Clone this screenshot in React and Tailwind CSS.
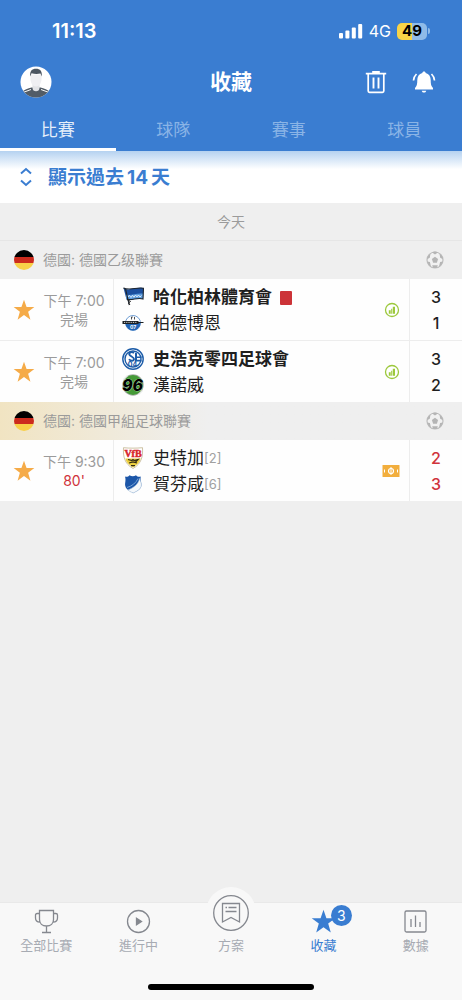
import { useState } from "react";

const tabs = ["比賽", "球隊", "賽事", "球員"];

const leagues = [
  {
    name: "德國: 德國乙级聯賽",
    highlight: false,
    matches: [
      {
        time: "7:00",
        status: "完場",
        live: false,
        badge: "stats",
        home: { name: "哈化柏林體育會", crest: "hertha", score: 3, bold: true, redCard: true },
        away: { name: "柏德博恩", crest: "paderborn", score: 1 },
      },
      {
        time: "7:00",
        status: "完場",
        live: false,
        badge: "stats",
        home: { name: "史浩克零四足球會", crest: "schalke", score: 3, bold: true },
        away: { name: "漢諾威", crest: "hannover", score: 2 },
      },
    ],
  },
  {
    name: "德國: 德國甲組足球聯賽",
    highlight: true,
    matches: [
      {
        time: "9:30",
        status: "80'",
        live: true,
        badge: "pitch",
        home: { name: "史特加", crest: "stuttgart", score: 2, rank: 2 },
        away: { name: "賀芬咸", crest: "hoffenheim", score: 3, rank: 6 },
      },
    ],
  },
];

const StarIcon = ({ className }) => (
  <svg viewBox="0 0 24 24" className={className} fill="currentColor" aria-hidden="true">
    <path d="M12 .8l2.8 8h8.5l-6.800 5.100 2.500 8.600L12 17.400l-7 5.100 2.500-8.600L.7 8.800h8.500z" />
  </svg>
);

const Avatar = () => (
  <svg viewBox="0 0 32 32" className="size-8" aria-hidden="true">
    <defs>
      <clipPath id="avatar">
        <circle cx="16" cy="16" r="15.5" />
      </clipPath>
    </defs>
    <circle cx="16" cy="16" r="15.5" fill="#fff" />
    <g clipPath="url(#avatar)">
      <path d="M2 32v-6c2-2.500 6-3.500 9.500-4.500h9c3.500 1 7.500 2 9.500 4.500v6z" fill="#525c66" />
      <path d="M3 26.500l8-3M29 26.500l-8-3" stroke="#fff" strokeWidth="1" />
      <path d="M12.500 17h7v5c0 2-1.500 3.300-3.500 3.300S12.500 24 12.500 22z" fill="#e2e3e6" />
      <path d="M10.500 8.500h11V13c0 4-2.500 7.500-5.500 7.500S10.500 17 10.500 13z" fill="#efeff2" />
      <path d="M10.300 10.500C9.500 5 12 2.700 16 2.700s6.500 2.300 5.700 7.800l-1.200-3c-3 .6-6 .5-9-.2z" fill="#4c5661" />
    </g>
  </svg>
);

const TrashIcon = () => (
  <svg viewBox="0 0 24 24" className="size-6" fill="none" stroke="currentColor" strokeWidth="1.700" aria-hidden="true">
    <path d="M1.800 3.600h20.400M8.200 2h7.600" strokeWidth="1.900" />
    <path d="M4.200 4v17a1.300 1.300 0 0 0 1.300 1.300h13a1.300 1.300 0 0 0 1.300-1.300V4" />
    <path d="M9.500 7.500v11M14.500 7.500v11" strokeWidth="1.900" />
  </svg>
);

const BellIcon = () => (
  <svg viewBox="0 0 24 24" className="size-6" fill="currentColor" aria-hidden="true">
    <path d="M12 1.600c1 0 1.600.7 1.700 1.500 3.300.9 5 3.700 5 7 0 4.300.5 6.200 2.300 8v1.500H3v-1.500c1.800-1.800 2.300-3.700 2.300-8 0-3.300 1.700-6.100 5-7 .1-.8.7-1.500 1.700-1.500zM9.700 20.700h4.600c-.3 1.200-1.200 1.900-2.300 1.900s-2-.7-2.300-1.900z" />
    <path d="M4.500 4C2.800 5.600 1.700 7.800 1.500 10.500M19.500 4c1.700 1.600 2.800 3.800 3 6.500" fill="none" stroke="currentColor" strokeWidth="1.700" />
  </svg>
);

const SignalIcon = () => (
  <svg viewBox="0 0 24 16" className="h-4 w-6" fill="#fff" aria-hidden="true">
    <rect x="0" y="10" width="4" height="5.500" rx="1" />
    <rect x="6.400" y="7.500" width="4" height="8" rx="1" />
    <rect x="12.800" y="4.500" width="4" height="11" rx="1" />
    <rect x="19.200" y="1" width="4" height="14.500" rx="1" />
  </svg>
);

const GermanFlag = () => (
  <span className="flex size-5 shrink-0 flex-col overflow-hidden rounded-full">
    <span className="flex-1 bg-black" />
    <span className="flex-1 bg-[#cc2b1d]" />
    <span className="flex-1 bg-[#f8d048]" />
  </span>
);

const BallIcon = () => (
  <svg viewBox="0 0 18 18" className="size-[18px]" aria-hidden="true">
    <circle cx="9" cy="9" r="8" fill="#f1f1f1" stroke="#bdbdbd" strokeWidth="1.200" />
    <g fill="#b5b5b5">
      <path d="M9 5.800l3.100 2.200-1.200 3.700H7.100L5.900 8z" />
      <path d="M5.800 1.300L9 3.500l3.200-2.200a8 8 0 0 0-6.400 0zM1 8.200l2.800-1.500.7-4.200A8 8 0 0 0 1 8.200zM17 8.200l-2.800-1.500-.7-4.200A8 8 0 0 1 17 8.200zM1.200 10.500l2.700.6 1.200 4.800a8 8 0 0 1-3.900-5.400zM16.800 10.500l-2.700.6-1.200 4.800a8 8 0 0 0 3.900-5.400zM6.200 14.300h5.600l-.7 2.500a8 8 0 0 1-4.200 0z" />
    </g>
  </svg>
);

const StatsBadge = () => (
  <svg viewBox="0 0 16 16" className="size-4" aria-label="統計">
    <circle cx="8" cy="8" r="6.500" fill="#fff" stroke="#9cc83c" strokeWidth="1.300" />
    <path d="M4.800 8.200h1.900v3.500H4.800zM7.200 6.800h1v4.900h-1zM8.800 4.800h2.200v6.900H8.800z" fill="#9cc83c" />
  </svg>
);

const PitchBadge = () => (
  <svg viewBox="0 0 18 12" className="h-3 w-[18px]" aria-label="現場">
    <rect x=".5" width="17" height="12" rx=".6" fill="#f2ae3d" />
    <circle cx="9" cy="6" r="2.500" fill="none" stroke="#fff" strokeWidth="1.200" />
    <path d="M9 2v8M2.500 4.500v3M15.500 4.500v3" stroke="#fff" />
  </svg>
);

const crests = {
  hertha: (
    <>
      <path d="M1.500 2l2 1C8 4.600 15 .6 21.500 2.300L21 13c-6-1.700-10 1.600-16.500.4z" fill="#1c4f9e" />
      <path d="M4 8.500c5 1.500 11-2 17.300-.8L21 13c-6-1.700-10 1.600-16.500.4z" fill="#5b9bdd" />
      <path d="M5.500 11.200l2-1.700 1.500 2 1.500-2.200 1.500 2L13.500 9l1.500 2 1.500-2 1.500 2 1.500-1.500" fill="none" stroke="#e8f1fb" strokeWidth=".9" />
      <path d="M1.500 2l2 1 3.800 16M1.500 2C8 5 15 .8 21.500 2.300L21 13c-6-1.700-10 1.600-16 .4" fill="none" stroke="#1d2630" strokeWidth="1.100" />
      <path d="M5 13.500l3.500 2-2 1.500 1.500 2" fill="none" stroke="#222" />
    </>
  ),
  paderborn: (
    <>
      <circle cx="11" cy="11" r="7.500" fill="#fff" stroke="#4d86c9" strokeWidth=".8" />
      <path d="M3.500 11h15a7.500 7.500 0 0 1-15 0z" fill="#2265b5" />
      <path d="M.5 9h16v1h5v1h-5v1H.5z" fill="#1b2024" />
      <path d="M2 10.400h13" stroke="#fff" strokeWidth=".8" strokeDasharray="1 .8" />
      <path d="M9.500 5h1.300M9.500 5v2.500M12.500 5v2.500" stroke="#222" strokeWidth=".8" fill="none" />
      <text x="11" y="17" fontSize="5" fontWeight="700" textAnchor="middle" fill="#fff">07</text>
    </>
  ),
  schalke: (
    <>
      <circle cx="11" cy="11" r="10.200" fill="#fff" stroke="#1c5ca8" strokeWidth="1.400" />
      <circle cx="11" cy="11" r="8" fill="#fff" stroke="#1c5ca8" strokeWidth="1.400" />
      <path d="M13 4.500v9h6.500v-1.800H15V5.200zM15 8.500h4.500v1.400H15z" fill="#1c5ca8" />
      <path d="M12 5.200c-2-2-5.200-.9-4.700 1.300.5 2 4.700 2.200 4.700 4.600 0 2.300-3.700 2-5 .2" fill="none" stroke="#1c5ca8" strokeWidth="1.900" />
      <text x="10.500" y="19" fontSize="7" fontWeight="700" textAnchor="middle" fill="#1c5ca8">04</text>
    </>
  ),
  hannover: (
    <>
      <circle cx="11" cy="11" r="10.700" fill="#a7aba8" />
      <circle cx="11" cy="11" r="9.900" fill="#459b37" />
      <path d="M1.500 5.500l4-4M16.500 20.500l4-4" stroke="#e7ece6" strokeWidth="1.200" />
      <text x="10.600" y="16.600" fontSize="16" fontWeight="800" fontStyle="italic" textAnchor="middle" fill="#000" stroke="#dfe8dd" strokeWidth=".6" paintOrder="stroke">96</text>
    </>
  ),
  stuttgart: (
    <>
      <path d="M1.500.7C7 1.300 15 1.300 20.500.7c.5 9-1 16-9.500 20.800C2.500 16.700 1 9.700 1.500.7z" fill="#fff" stroke="#b9a97e" strokeWidth=".7" />
      <path d="M3.300 11.500h15.400c-1 3.800-3.500 6.600-7.700 9-4.200-2.400-6.700-5.200-7.700-9z" fill="#eccf3f" />
      <path d="M6 12.500l4 1 1-1 1 1 4-1-2.500 2.600M7 16l3-.8h2l3 .8M9 18.600l4 .1" fill="none" stroke="#332c14" strokeWidth="1.200" />
      <text x="11" y="10" fontSize="10" fontWeight="700" textAnchor="middle" fill="#d8262c" fontFamily="Liberation Serif, serif" stroke="#d8262c" strokeWidth=".5">VfB</text>
    </>
  ),
  hoffenheim: (
    <>
      <path d="M3 3.500c1.800.6 3.200.2 4.500-1.300 2 1.400 4.500 1.400 6.500 0 1.300 1.500 3 1.900 4.800 1.300-1 4 1.200 6.500.5 9.500-.9 4-5 5.300-8 7-3-1.700-7.100-3-8-7-.7-3 1-5.500-.3-9.500z" fill="#1c56a8" />
      <path d="M17.500 5.500c-1 6-6.300 9.500-11.700 11.500 1.500 1.500 3.500 2 5.500 3 3-1.700 7.100-3 8-7 .5-2.200-.9-5-1.800-7.500z" fill="#f5f8fb" stroke="#adc4dc" strokeWidth=".6" />
      <path d="M16 5.500c-2 4.500-6 7.500-11 9" fill="none" stroke="#8ab4e0" strokeWidth=".8" />
    </>
  ),
};

const Team = ({ team, live }) => (
  <div className="flex h-[26px] items-center gap-[9px]">
    <svg viewBox="0 0 22 22" className="size-[22px] shrink-0 font-['Inter']" aria-hidden="true">
      {crests[team.crest]}
    </svg>
    <span className="flex items-center pt-0.5 text-[17px] text-[#1f1f1f]">
      <span className={team.bold ? "font-bold" : ""}>{team.name}</span>
      {live && <span className="text-[13px] text-[#a0a0a0]">[{team.rank}]</span>}
      {team.redCard && <span className="ml-2 h-3.5 w-3 rounded-[1px] bg-[#cc3338]" />}
    </span>
  </div>
);

const Match = ({ match }) => {
  const [starred, setStarred] = useState(true);

  return (
    <li className="box-content flex h-[61px] border-b border-[#ededed] bg-[#fefefe] last:border-b-0">
      <div className="flex w-[114px] items-center border-r border-[#ededed] pl-[13px]">
        <button
          type="button"
          aria-label="收藏比賽"
          aria-pressed={starred}
          onClick={() => setStarred(!starred)}
          className={starred ? "text-[#f5ab48]" : "text-[#cccccc]"}
        >
          <StarIcon className="size-[22px]" />
        </button>
        <div className="flex flex-1 flex-col items-center text-sm leading-[19px] text-[#9b9b9b]">
          <span className="flex gap-1">
            下午<span>{match.time}</span>
          </span>
          <span className={match.live ? "text-[#d0333b]" : ""}>{match.status}</span>
        </div>
      </div>
      <div className="flex flex-1 flex-col justify-center pl-2">
        <Team team={match.home} live={match.live} />
        <Team team={match.away} live={match.live} />
      </div>
      <div className="flex items-center pr-[9px]">
        {match.badge === "stats" ? <StatsBadge /> : <PitchBadge />}
      </div>
      <div
        className={
          "flex w-[53px] flex-col items-center justify-center border-l border-[#ededed] text-base leading-[26px] font-medium " +
          (match.live ? "text-[#d0333b]" : "text-[#1f1f1f]")
        }
      >
        <span>{match.home.score}</span>
        <span>{match.away.score}</span>
      </div>
    </li>
  );
};

const navItems = [
  {
    label: "全部比賽",
    icon: (
      <path d="M5.500 1.500h14v9c0 4-2.800 6.500-7 6.500s-7-2.500-7-6.500zM5.500 4.500H3.200C2 4.500 1.500 5 1.500 6v3c0 2.600 1.200 4 4.500 4.200M19.500 4.500h2.300c1.200 0 1.700.5 1.700 1.500v3c0 2.600-1.200 4-4.500 4.200M12.500 17v6.500M8 23.500h9" />
    ),
  },
  {
    label: "進行中",
    icon: (
      <>
        <circle cx="12.500" cy="12.500" r="11" />
        <path d="M10.500 9.300l5 3.200-5 3.200z" fill="currentColor" />
      </>
    ),
  },
  { label: "方案", raised: true },
  { label: "收藏", active: true, count: 3 },
  {
    label: "數據",
    icon: (
      <>
        <rect x="2" y="2" width="21" height="21" rx="1.500" />
        <path d="M8 10v8M12.500 6.500V18M17 13v5" />
      </>
    ),
  },
];

const NavIcon = ({ item }) => {
  if (item.raised) {
    return (
      <span className="relative flex h-[25px] items-center justify-center">
        <svg viewBox="0 0 50 50" className="absolute -top-[22px] size-[50px] max-w-none" fill="none" stroke="#85888f" strokeWidth="1.300" aria-hidden="true">
          <circle cx="25" cy="25" r="25" fill="#f8f8f8" stroke="none" />
          <circle cx="25" cy="26" r="17.300" />
          <path d="M16.500 16.500h17V35L25 30.500 16.500 35zM19.500 20.500h1.500M22.500 20.500h8M19.500 24.500h11" />
        </svg>
      </span>
    );
  }
  if (item.active) {
    return (
      <span className="relative">
        <StarIcon className="size-[25px]" />
        <span className="absolute -top-1 left-5 flex size-[21px] items-center justify-center rounded-full bg-[#3a7dd1] text-sm text-white">
          {item.count}
        </span>
      </span>
    );
  }
  return (
    <svg viewBox="0 0 25 25" className="size-[25px] text-[#85888f]" fill="none" stroke="currentColor" strokeWidth="1.300" aria-hidden="true">
      {item.icon}
    </svg>
  );
};

const App = () => {
  const [tab, setTab] = useState("比賽");

  return (
    <div
      lang="zh-Hant"
      className="flex min-h-screen flex-col bg-[#efefef] font-['Inter','Noto_Sans_CJK_TC',sans-serif]"
    >
      <header className="bg-[#3a7dd1] text-white">
        <div className="flex items-center justify-between pt-4 pr-8 pl-[52px]">
          <span className="text-xl leading-[30px] font-semibold">11:13</span>
          <div className="flex items-center gap-1.5">
            <SignalIcon />
            <span className="text-base">4G</span>
            <span className="flex items-center gap-px">
              <span className="flex h-[17px] w-[30px] items-center justify-center rounded-[5px] bg-linear-to-r from-[#f8d347] from-50% to-[#8fbbe8] to-50% text-[15px] font-bold text-black">
                49
              </span>
              <span className="h-1.5 w-0.5 rounded-r-full bg-[#8fbbe8]" />
            </span>
          </div>
        </div>

        <div className="grid grid-cols-3 items-center px-5 pt-5 pb-2">
          <button type="button" aria-label="帳戶" className="justify-self-start rounded-full">
            <Avatar />
          </button>
          <h1 className="text-center text-[21px] leading-8 font-bold">收藏</h1>
          <div className="flex justify-end gap-6 pr-1.5">
            <button type="button" aria-label="刪除">
              <TrashIcon />
            </button>
            <button type="button" aria-label="通知">
              <BellIcon />
            </button>
          </div>
        </div>

        <div role="tablist" className="grid grid-cols-4">
          {tabs.map((name) => (
            <button
              key={name}
              type="button"
              role="tab"
              aria-selected={tab === name}
              onClick={() => setTab(name)}
              className={
                "border-b-[3px] pt-2.5 pb-1 text-[17px] leading-7 " +
                (tab === name ? "border-white text-[#e6effa]" : "border-transparent text-[#8ab4e6]")
              }
            >
              {name}
            </button>
          ))}
        </div>
      </header>

      <main className="flex-1">
        <button
          type="button"
          className="flex h-[52px] w-full items-center gap-3 bg-white bg-linear-to-b from-[#b5d2f0] to-white to-35% pl-4 text-[19px] font-bold text-[#3a7dd1]"
        >
          <svg viewBox="0 0 20 20" className="size-5" fill="none" stroke="currentColor" strokeWidth="2" aria-hidden="true">
            <path d="M5 6.500l5-4.500 5 4.500M5 13.500l5 4.500 5-4.500" />
          </svg>
          <span className="flex gap-[3px] pt-0.5">
            顯示過去<span>14</span>天
          </span>
        </button>

        <h2 className="flex h-[38px] items-center justify-center border-b border-[#e6e6e6] text-sm text-[#9b9b9b]">
          今天
        </h2>

        {leagues.map((league) => (
          <section key={league.name}>
            <div
              className={
                "flex h-[38px] items-center gap-[9px] pr-[18px] pl-3.5 " +
                (league.highlight ? "bg-linear-to-r from-[#f1e4c2] to-[#efefef] to-45%" : "")
              }
            >
              <GermanFlag />
              <h3 className="flex-1 text-sm text-[#9b9b9b]">{league.name}</h3>
              <BallIcon />
            </div>
            <ul>
              {league.matches.map((match) => (
                <Match key={match.home.name} match={match} />
              ))}
            </ul>
          </section>
        ))}
      </main>

      <nav className="border-t border-[#e9e9e9] bg-[#f8f8f8] pt-1.5">
        <div className="grid grid-cols-5">
          {navItems.map((item) => (
            <a
              key={item.label}
              href="#"
              aria-current={item.active ? "page" : undefined}
              className={
                "flex flex-col items-center gap-px text-[13px] leading-5 " +
                (item.active ? "text-[#3a7dd1]" : "text-[#a7abb3]")
              }
            >
              <NavIcon item={item} />
              {item.label}
            </a>
          ))}
        </div>
        <div className="mx-auto mt-[29px] mb-2.5 h-1.5 w-[36%] rounded-full bg-black" />
      </nav>
    </div>
  );
};

export default App;
